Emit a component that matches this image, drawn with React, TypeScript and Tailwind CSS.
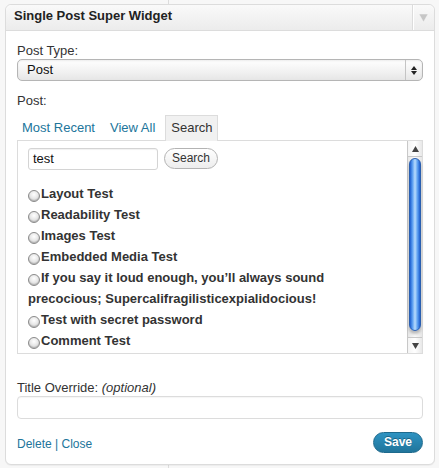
import React from "react";

const posts = [
  "Layout Test",
  "Readability Test",
  "Images Test",
  "Embedded Media Test",
  "If you say it loud enough, you’ll always sound precocious; Supercalifragilisticexpialidocious!",
  "Test with secret password",
  "Comment Test",
];

function Radio() {
  return (
    <span className="mr-px inline-block h-[12px] w-[12px] rounded-full border border-[#8a8a8a] bg-[radial-gradient(circle_at_50%_35%,#ffffff_0%,#e4e4e4_55%,#bdbdbd_100%)] align-[-4px] shadow-[inset_0_-1px_1px_rgba(0,0,0,0.15)]" />
  );
}

function Triangle({ up }: { up?: boolean }) {
  return (
    <svg width="7" height="6" viewBox="0 0 7 6">
      <path d={up ? "M3.5 0 L7 6 L0 6 Z" : "M0 0 L7 0 L3.5 6 Z"} fill="#444" />
    </svg>
  );
}

function Scrollbar() {
  return (
    <div className="flex w-[15px] flex-col border-l border-[#c8c8c8] bg-[linear-gradient(to_right,#e6e6e6,#fafafa_50%,#e6e6e6)]">
      <div className="flex h-[16px] items-center justify-center border-b border-[#c8c8c8] bg-[linear-gradient(to_right,#f4f4f4,#ffffff_50%,#e8e8e8)]">
        <Triangle up />
      </div>
      <div className="flex-1 px-px pt-px">
        <div className="h-[173px] rounded-[7px] border border-[#2a5fb0] bg-[linear-gradient(to_right,#1d5fd0,#5d9ff0_25%,#b8dcfd_50%,#5d9ff0_75%,#1d5fd0)] shadow-[0_3px_3px_rgba(0,0,0,0.25)]" />
      </div>
      <div className="flex h-[16px] items-center justify-center border-t border-[#c8c8c8] bg-[linear-gradient(to_right,#f4f4f4,#ffffff_50%,#e8e8e8)]">
        <Triangle />
      </div>
    </div>
  );
}

export default function App() {
  return (
    <div className="relative min-h-[468px] bg-[#f7f7f7] pl-[5px] pt-[4px] font-['Liberation_Sans',Arial,sans-serif] text-[13px] text-[#333]">
      <div className="absolute bottom-0 left-[168px] top-0 w-px bg-[#dcdcdc]" />

      <div className="relative w-[430px] rounded-[6px] border border-[#dcdcdc] bg-white shadow-[0_1px_0_rgba(0,0,0,0.04)]">
        {/* header */}
        <div className="flex h-[26px] rounded-t-[6px] border-b border-[#dcdcdc] bg-[linear-gradient(to_bottom,#f9f9f9,#ececec)]">
          <div className="flex-1 pl-[8px] pt-[3px] text-[13px] font-bold leading-[16px] text-[#222]">
            Single Post Super Widget
          </div>
          <div className="flex w-[22px] items-center justify-center border-l border-[#dcdcdc] shadow-[inset_1px_0_0_#fff]">
            <svg width="9" height="8" viewBox="0 0 9 8">
              <path d="M0 0 L9 0 L4.5 8 Z" fill="#c6c6c6" stroke="#f5f5f5" strokeWidth="0.5" />
            </svg>
          </div>
        </div>

        {/* body */}
        <div className="px-[11px] pb-[11px] pt-[12px]">
          <div className="leading-[15px]">Post Type:</div>
          <div className="mt-px flex h-[22px] w-[406px] items-stretch rounded-[5px] border border-[#b5b5b5] bg-[linear-gradient(to_bottom,#ffffff,#f1f1f1_60%,#e6e6e6)] shadow-[inset_0_1px_2px_rgba(0,0,0,0.08)]">
            <div className="flex-1 pl-[9px] leading-[20px] text-[#111]">Post</div>
            <div className="flex w-[17px] flex-col items-center justify-center gap-px border-l border-[#c4c4c4]">
              <svg width="6" height="4" viewBox="0 0 6 4">
                <path d="M3 0 L6 4 L0 4 Z" fill="#222" />
              </svg>
              <svg width="6" height="4" viewBox="0 0 6 4">
                <path d="M0 0 L6 0 L3 4 Z" fill="#222" />
              </svg>
            </div>
          </div>

          <div className="mt-[12px] leading-[15px]">Post:</div>

          {/* tabs */}
          <div className="mt-[7px] flex gap-[5px] leading-[15px]">
            <div className="px-[5px] pt-[5px] text-[#21759b]">Most Recent</div>
            <div className="px-[5px] pt-[5px] text-[#21759b]">View All</div>
            <div className="relative z-10 -mb-px h-[26px] border border-b-0 border-[#dcdcdc] bg-[#f1f1f1] px-[5px] pt-[4px] text-[#333]">
              Search
            </div>
          </div>

          <div className="flex h-[214px] w-[406px] border border-[#dcdcdc] bg-white">
            <div className="flex-1 overflow-hidden pl-[10px] pr-[12px] pt-[7px]">
              <div className="flex items-start gap-[6px]">
                <div className="h-[22px] w-[130px] rounded-[3px] border border-[#d4d4d4] pl-[4px] leading-[20px] text-[#111] shadow-[inset_0_1px_1px_rgba(0,0,0,0.06)]">
                  test
                </div>
                <div className="h-[21px] w-[54px] rounded-full border border-[#b3b3b3] bg-[linear-gradient(to_bottom,#ffffff,#ededed)] text-center text-[12px] leading-[19px] text-[#333]">
                  Search
                </div>
              </div>
              <div className="mt-[13px] text-[13px] font-bold leading-[21px] text-[#333]">
                {posts.map((p) => (
                  <div key={p}>
                    <Radio />
                    {p}
                  </div>
                ))}
              </div>
            </div>
            <Scrollbar />
          </div>

          <div className="mt-[26px] leading-[15px]">
            Title Override: <i>(optional)</i>
          </div>
          <div className="mt-px h-[23px] w-[406px] rounded-[4px] border border-[#dcdcdc] bg-white shadow-[inset_0_1px_1px_rgba(0,0,0,0.04)]" />

          <div className="mt-[13px] flex items-start justify-between">
            <div className="pt-[5px] text-[12px] leading-[15px] text-[#21759b]">
              <span>Delete</span> | <span>Close</span>
            </div>
            <div className="h-[21px] rounded-full border border-[#1e6a8d] bg-[linear-gradient(to_bottom,#2e93c2,#21759b)] px-[10px] text-[12px] font-bold leading-[19px] text-white [text-shadow:0_-1px_0_rgba(0,0,0,0.3)]">
              Save
            </div>
          </div>
        </div>
      </div>
    </div>
  );
}
